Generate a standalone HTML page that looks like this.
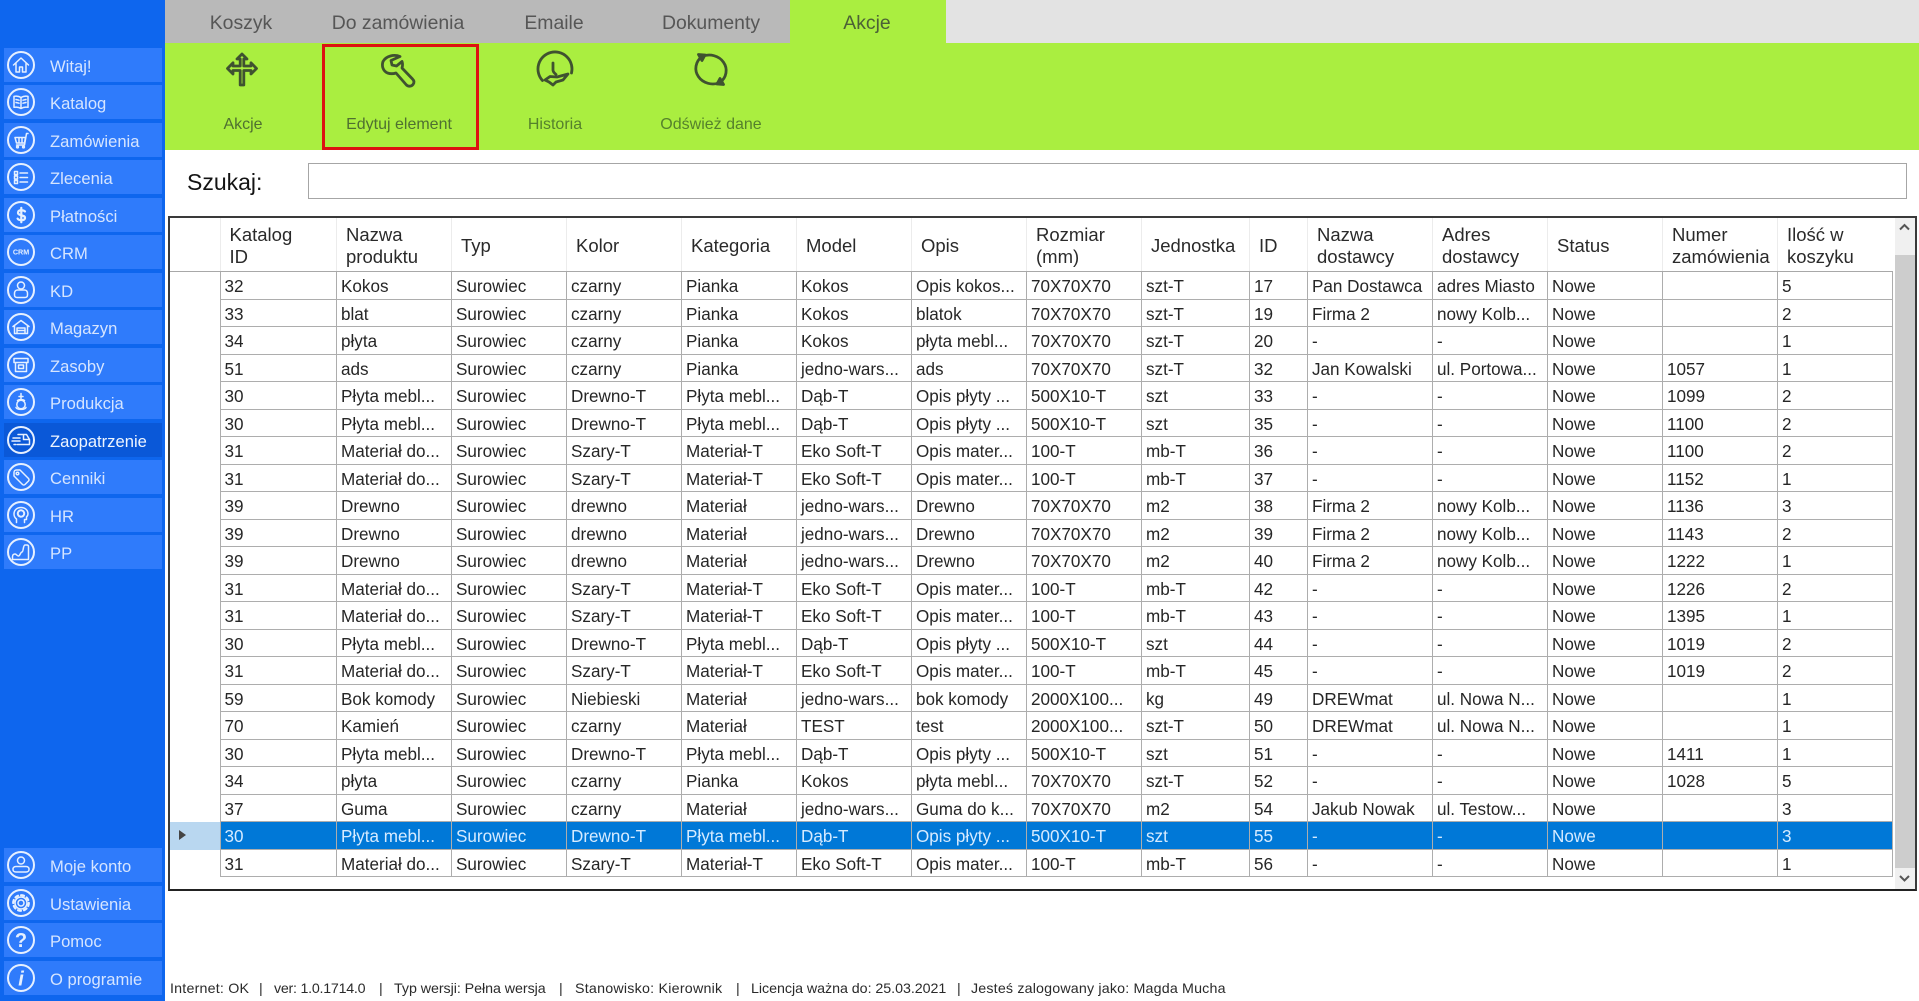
<!DOCTYPE html>
<html lang="pl"><head><meta charset="utf-8"><title>Akcje</title>
<style>
*{box-sizing:border-box}
html,body{margin:0;padding:0}
html{background:#fff}
body{width:1919px;height:1001px;position:relative;overflow:hidden;background:#fff;font-family:"Liberation Sans",sans-serif;color:#222;filter:blur(.35px)}
.abs{position:absolute}
#side{position:absolute;left:0;top:0;width:165px;height:1001px;background:#0e66ee}
.it{position:absolute;left:4px;width:158px;height:34px;background:#2f7bfb;color:#d6e5ff;font-size:16.6px;line-height:37.5px;padding-left:46px;white-space:nowrap}
.it.on{background:#0a58d8;color:#eef5ff}
.it svg{position:absolute;left:2px;top:2px;width:30px;height:30px;fill:none;stroke:#e6f0ff;stroke-width:1.5;stroke-linecap:round;stroke-linejoin:round}
.it svg circle.o{stroke-width:2}
.it svg text{fill:#e6f0ff;stroke:none;font-family:"Liberation Sans",sans-serif;text-anchor:middle;font-weight:bold}
.tab{position:absolute;top:0;height:43px;width:156px;text-align:center;font-size:19.4px;line-height:47px;color:#565656}
#band{position:absolute;left:165px;top:43px;width:1754px;height:107px;background:#aaee40}
.tl{position:absolute;top:116px;width:156px;text-align:center;font-size:16px;line-height:18px;color:#55812c}
.ti{position:absolute;top:49px;width:40px;height:40px;fill:none;stroke:#3f5230;stroke-width:2.8;stroke-linecap:round;stroke-linejoin:round}
#tbl{position:absolute;left:168px;top:216px;width:1749px;height:675px;border:2px solid #3a3a3a;border-bottom-color:#222;background:#fff;overflow:hidden}
.r,.h{display:grid;grid-template-columns:50.5px 116.5px 115px 115px 115px 115px 115px 115px 115px 108px 58px 125px 115px 115px 115px 115px;position:absolute;left:0;width:1723px}
.h{top:0;height:54px;border-bottom:1.5px solid #a8a8a8;font-size:18.5px;line-height:22px;color:#2a2a2a;grid-template-rows:52.5px}
.h div{display:flex;align-items:center;padding-left:9px;padding-top:4px;border-right:1.5px solid #ececec}
.r{height:27.5px;font-size:17.1px;line-height:29.5px;color:#262626;grid-template-rows:27.5px}
.r div{border-right:1.5px solid #adadad;border-bottom:1.5px solid #adadad;padding-left:4px;white-space:nowrap;overflow:hidden}
.r div:first-child{border-bottom:none;border-right:1.5px solid #adadad;padding:0}
.r.s{color:#d6ebff}
.r.s div{background:#0078d7}
.r.s div:first-child{background:#b9d7f0;position:relative}
.r.s div:first-child:after{content:"";position:absolute;left:9px;top:8px;border-left:7px solid #444;border-top:5.5px solid transparent;border-bottom:5.5px solid transparent}
.st{position:absolute;top:980px;font-size:14.25px;line-height:18px;color:#2a2a2a;white-space:nowrap}
</style></head><body>

<div id="side">
<div class="it" style="top:47.5px"><svg viewBox="0 0 30 30"><circle class="o" cx="15" cy="15" r="13"/><path d="M7.5 15 15 8l7.5 7M10 13.5V22h3.5v-5h3v5H20v-8.500"/></svg>Witaj!</div>
<div class="it" style="top:85px"><svg viewBox="0 0 30 30"><circle class="o" cx="15" cy="15" r="13"/><path d="M15 10.500c-2-1.300-4.500-1.700-7-1.200v11c2.500-.5 5-.1 7 1.200 2-1.300 4.500-1.700 7-1.200v-11c-2.500-.5-5-.1-7 1.200zM15 10.500v11M10 12.500l3 .7M10 15.500l3 .7M20 12.500l-3 .7M20 15.500l-3 .7"/></svg>Katalog</div>
<div class="it" style="top:122.5px"><svg viewBox="0 0 30 30"><circle class="o" cx="15" cy="15" r="13"/><path d="M22 8.500h-1.500L18.500 20h-8M9 12.500h10.500l-1 5.500h-8zM13 12.500v5.500M16 12.500v5.500"/><circle cx="11.500" cy="22" r=".9"/><circle cx="17.500" cy="22" r=".9"/></svg>Zamówienia</div>
<div class="it" style="top:160px"><svg viewBox="0 0 30 30"><circle class="o" cx="15" cy="15" r="13"/><path d="M8.500 9.500h3v3h-3zM8.500 14h3v3h-3zM8.500 18.500h3v3h-3zM14 11h7.500M14 15.500h7.500M14 20h7.500"/></svg>Zlecenia</div>
<div class="it" style="top:197.5px"><svg viewBox="0 0 30 30"><circle class="o" cx="15" cy="15" r="13"/><path stroke-width="2.200" d="M19 11.500c-1-1.500-7-2.300-7 1.200 0 3.300 7 1.800 7 5.200 0 3.200-6.200 2.800-7.400.7M15.300 7.800v14.400"/></svg>Płatności</div>
<div class="it" style="top:235px"><svg viewBox="0 0 30 30"><circle class="o" cx="15" cy="15" r="13"/><text x="15" y="17.500" font-size="7.200">CRM</text></svg>CRM</div>
<div class="it" style="top:272.500px"><svg viewBox="0 0 30 30"><circle class="o" cx="15" cy="15" r="13"/><circle cx="15" cy="10.500" r="3.500"/><path d="M11.500 15h7c2 0 3 1.500 3 3.500V20c0 1.500-1 2.500-2.500 2.500h-8C9.500 22.500 8.500 21.500 8.500 20v-1.500c0-2 1-3.500 3-3.500z"/></svg>KD</div>
<div class="it" style="top:310px"><svg viewBox="0 0 30 30"><circle class="o" cx="15" cy="15" r="13"/><path d="M7 14.500 15 8.500l8 6M8.500 13.500V21.500h13v-8M11 21.500V16h8v5.500M11 18.500h8"/></svg>Magazyn</div>
<div class="it" style="top:347.500px"><svg viewBox="0 0 30 30"><circle class="o" cx="15" cy="15" r="13"/><path d="M8 8.500h14v4H8zM9.500 12.500v9h11v-9M12.500 15h5v3.500h-5z"/></svg>Zasoby</div>
<div class="it" style="top:385px"><svg viewBox="0 0 30 30"><circle class="o" cx="15" cy="15" r="13"/><path d="M15 6.500V12M13 9.500h4M11.500 13.500c2-1.500 5-1.500 7 0"/><circle cx="15" cy="17.500" r="4.200"/><path d="M10 20.500c1 2.500 9 2.500 10 0"/></svg>Produkcja</div>
<div class="it on" style="top:422.500px"><svg viewBox="0 0 30 30"><circle class="o" cx="15" cy="15" r="13"/><path d="M7 13h7M6 16h8M8 19.500h2M12 9.500h8.500l3 5v5h-12M17.500 9.500v5h6M14 19.500h5"/></svg>Zaopatrzenie</div>
<div class="it" style="top:460px"><svg viewBox="0 0 30 30"><circle class="o" cx="15" cy="15" r="13"/><path d="M8 10.500c0-1.500 1-2.500 2.500-2.500h3.500l8.500 8.500c.7.7.7 1.800 0 2.500l-3.500 3.500c-.7.7-1.800.7-2.500 0L8 14z"/><circle cx="11.500" cy="11.500" r="1.300"/></svg>Cenniki</div>
<div class="it" style="top:497.500px"><svg viewBox="0 0 30 30"><circle class="o" cx="15" cy="15" r="13"/><path d="M10.500 22.500v-3.500C8.500 17.500 8 15.500 8 14c0-4 3-6.500 7-6.500s7 2.500 7 6.500c0 1.500-.5 2-1.500 3v2.500h-2v3"/><circle cx="15" cy="13.500" r="3.200" stroke-dasharray="1.500 .8" stroke-width="2"/></svg>HR</div>
<div class="it" style="top:535px"><svg viewBox="0 0 30 30"><circle class="o" cx="15" cy="15" r="13"/><path d="M6.500 22.500v-3c0-1.500 1-2.500 2.500-2.500 1.500 0 2 2 3.500 2s2-4 3.500-4 1-7 3-7h2c1 0 1.500.5 1.500 1.500v13zM6.500 22.500h16"/></svg>PP</div>

<div class="it" style="top:848px"><svg viewBox="0 0 30 30"><circle class="o" cx="15" cy="15" r="13"/><circle cx="15" cy="10.500" r="3.500"/><path d="M10 16.500h10c2 0 3 1.200 3 2.500v.5c0 1.300-1 2.500-3 2.500H10c-2 0-3-1.200-3-2.500V19c0-1.300 1-2.500 3-2.500z"/></svg>Moje konto</div>
<div class="it" style="top:885.500px"><svg viewBox="0 0 30 30"><circle class="o" cx="15" cy="15" r="13"/><circle cx="15" cy="15" r="3"/><circle cx="15" cy="15" r="6"/><circle cx="15" cy="15" r="7.800" stroke-width="2.200" stroke-dasharray="3 3.100"/></svg>Ustawienia</div>
<div class="it" style="top:923px"><svg viewBox="0 0 30 30"><circle class="o" cx="15" cy="15" r="13"/><text x="15" y="22" font-size="20">?</text></svg>Pomoc</div>
<div class="it" style="top:960.500px"><svg viewBox="0 0 30 30"><circle class="o" cx="15" cy="15" r="13"/><text x="15" y="22.500" font-size="20" font-style="italic" font-family="Liberation Serif">i</text></svg>O programie</div>
</div>

<div class="abs" style="left:165px;top:0;width:1754px;height:43px;background:#e3e3e3"></div>
<div class="abs" style="left:165px;top:0;width:625px;height:43px;background:#b9b9b9"></div>
<div class="abs" style="left:790px;top:0;width:156px;height:43px;background:#aaee40"></div>
<div class="tab" style="left:163px">Koszyk</div>
<div class="tab" style="left:320px">Do zamówienia</div>
<div class="tab" style="left:476px">Emaile</div>
<div class="tab" style="left:633px">Dokumenty</div>
<div class="tab" style="left:789px;color:#4c6136">Akcje</div>

<div id="band"></div>
<svg class="ti" style="left:222px" viewBox="0 0 40 40"><path d="M20 5l-5 5h3.200v7H11v-3.200l-5.500 5.700L11 25v-3.500h7.200V36h3.600V21.500H29V25l5.500-5.500L29 13.800V17h-7.200v-7H25z"/></svg>
<svg class="ti" style="left:378px" viewBox="0 0 40 40"><path d="M22 7.500C16 5 8 7 5 12.500 3.500 17 5 22 9.500 24c3 1 5.500 1 8.500 0l10 11.500c2 2.500 5.500 2 7 0 1.500-2 1-4-.5-5.500L24 19c1-3 .5-5 0-6.500L18.500 17 14 16l-1-4.500z"/></svg>
<svg class="ti" style="left:535px" viewBox="0 0 40 40"><path d="M7.500 31.500A17 17 0 1 1 36.500 24"/><path d="M18 14v7c0 2 1.500 3 3 4.500"/><path d="M10 31l5-3.500 7 .5 11-3-5 6-7 2-3 3-4-3z"/></svg>
<svg class="ti" style="left:691px" viewBox="0 0 40 40"><path d="M11 7.500A17 15.500 0 0 1 29 33.500A17 15.500 0 0 1 11 7.500"/><path d="M7.500 5.500l6.500.5-3 5.500zM32.500 35.500l-6.500-.5 3-5.500z" fill="#3f5230"/></svg>

<div class="tl" style="left:165px;color:#4f7030">Akcje</div>
<div class="tl" style="left:321px;color:#4f7030">Edytuj element</div>
<div class="tl" style="left:477px">Historia</div>
<div class="tl" style="left:633px">Odśwież dane</div>
<div class="abs" style="left:322px;top:44px;width:157px;height:105.500px;border:3px solid #dd1111"></div>

<div class="abs" style="left:187px;top:168px;font-size:23px;line-height:28px;color:#141414">Szukaj:</div>
<div class="abs" style="left:308px;top:163px;width:1599px;height:36px;border:1.500px solid #a6a6a6;background:#fff"></div>

<div id="tbl">
<div class="h"><div></div><div>Katalog<br>ID</div><div>Nazwa<br>produktu</div><div>Typ</div><div>Kolor</div><div>Kategoria</div><div>Model</div><div>Opis</div><div>Rozmiar<br>(mm)</div><div>Jednostka</div><div>ID</div><div>Nazwa<br>dostawcy</div><div>Adres<br>dostawcy</div><div>Status</div><div>Numer<br>zamówienia</div><div style="border-right:0">Ilość w<br>koszyku</div></div>
<div class="r" style="top:54px"><div></div><div>32</div><div>Kokos</div><div>Surowiec</div><div>czarny</div><div>Pianka</div><div>Kokos</div><div>Opis kokos...</div><div>70X70X70</div><div>szt-T</div><div>17</div><div>Pan Dostawca</div><div>adres Miasto</div><div>Nowe</div><div></div><div>5</div></div>
<div class="r" style="top:81.500px"><div></div><div>33</div><div>blat</div><div>Surowiec</div><div>czarny</div><div>Pianka</div><div>Kokos</div><div>blatok</div><div>70X70X70</div><div>szt-T</div><div>19</div><div>Firma 2</div><div>nowy Kolb...</div><div>Nowe</div><div></div><div>2</div></div>
<div class="r" style="top:109px"><div></div><div>34</div><div>płyta</div><div>Surowiec</div><div>czarny</div><div>Pianka</div><div>Kokos</div><div>płyta mebl...</div><div>70X70X70</div><div>szt-T</div><div>20</div><div>-</div><div>-</div><div>Nowe</div><div></div><div>1</div></div>
<div class="r" style="top:136.500px"><div></div><div>51</div><div>ads</div><div>Surowiec</div><div>czarny</div><div>Pianka</div><div>jedno-wars...</div><div>ads</div><div>70X70X70</div><div>szt-T</div><div>32</div><div>Jan Kowalski</div><div>ul. Portowa...</div><div>Nowe</div><div>1057</div><div>1</div></div>
<div class="r" style="top:164px"><div></div><div>30</div><div>Płyta mebl...</div><div>Surowiec</div><div>Drewno-T</div><div>Płyta mebl...</div><div>Dąb-T</div><div>Opis płyty ...</div><div>500X10-T</div><div>szt</div><div>33</div><div>-</div><div>-</div><div>Nowe</div><div>1099</div><div>2</div></div>
<div class="r" style="top:191.500px"><div></div><div>30</div><div>Płyta mebl...</div><div>Surowiec</div><div>Drewno-T</div><div>Płyta mebl...</div><div>Dąb-T</div><div>Opis płyty ...</div><div>500X10-T</div><div>szt</div><div>35</div><div>-</div><div>-</div><div>Nowe</div><div>1100</div><div>2</div></div>
<div class="r" style="top:219px"><div></div><div>31</div><div>Materiał do...</div><div>Surowiec</div><div>Szary-T</div><div>Materiał-T</div><div>Eko Soft-T</div><div>Opis mater...</div><div>100-T</div><div>mb-T</div><div>36</div><div>-</div><div>-</div><div>Nowe</div><div>1100</div><div>2</div></div>
<div class="r" style="top:246.500px"><div></div><div>31</div><div>Materiał do...</div><div>Surowiec</div><div>Szary-T</div><div>Materiał-T</div><div>Eko Soft-T</div><div>Opis mater...</div><div>100-T</div><div>mb-T</div><div>37</div><div>-</div><div>-</div><div>Nowe</div><div>1152</div><div>1</div></div>
<div class="r" style="top:274px"><div></div><div>39</div><div>Drewno</div><div>Surowiec</div><div>drewno</div><div>Materiał</div><div>jedno-wars...</div><div>Drewno</div><div>70X70X70</div><div>m2</div><div>38</div><div>Firma 2</div><div>nowy Kolb...</div><div>Nowe</div><div>1136</div><div>3</div></div>
<div class="r" style="top:301.500px"><div></div><div>39</div><div>Drewno</div><div>Surowiec</div><div>drewno</div><div>Materiał</div><div>jedno-wars...</div><div>Drewno</div><div>70X70X70</div><div>m2</div><div>39</div><div>Firma 2</div><div>nowy Kolb...</div><div>Nowe</div><div>1143</div><div>2</div></div>
<div class="r" style="top:329px"><div></div><div>39</div><div>Drewno</div><div>Surowiec</div><div>drewno</div><div>Materiał</div><div>jedno-wars...</div><div>Drewno</div><div>70X70X70</div><div>m2</div><div>40</div><div>Firma 2</div><div>nowy Kolb...</div><div>Nowe</div><div>1222</div><div>1</div></div>
<div class="r" style="top:356.500px"><div></div><div>31</div><div>Materiał do...</div><div>Surowiec</div><div>Szary-T</div><div>Materiał-T</div><div>Eko Soft-T</div><div>Opis mater...</div><div>100-T</div><div>mb-T</div><div>42</div><div>-</div><div>-</div><div>Nowe</div><div>1226</div><div>2</div></div>
<div class="r" style="top:384px"><div></div><div>31</div><div>Materiał do...</div><div>Surowiec</div><div>Szary-T</div><div>Materiał-T</div><div>Eko Soft-T</div><div>Opis mater...</div><div>100-T</div><div>mb-T</div><div>43</div><div>-</div><div>-</div><div>Nowe</div><div>1395</div><div>1</div></div>
<div class="r" style="top:411.500px"><div></div><div>30</div><div>Płyta mebl...</div><div>Surowiec</div><div>Drewno-T</div><div>Płyta mebl...</div><div>Dąb-T</div><div>Opis płyty ...</div><div>500X10-T</div><div>szt</div><div>44</div><div>-</div><div>-</div><div>Nowe</div><div>1019</div><div>2</div></div>
<div class="r" style="top:439px"><div></div><div>31</div><div>Materiał do...</div><div>Surowiec</div><div>Szary-T</div><div>Materiał-T</div><div>Eko Soft-T</div><div>Opis mater...</div><div>100-T</div><div>mb-T</div><div>45</div><div>-</div><div>-</div><div>Nowe</div><div>1019</div><div>2</div></div>
<div class="r" style="top:466.500px"><div></div><div>59</div><div>Bok komody</div><div>Surowiec</div><div>Niebieski</div><div>Materiał</div><div>jedno-wars...</div><div>bok komody</div><div>2000X100...</div><div>kg</div><div>49</div><div>DREWmat</div><div>ul. Nowa N...</div><div>Nowe</div><div></div><div>1</div></div>
<div class="r" style="top:494px"><div></div><div>70</div><div>Kamień</div><div>Surowiec</div><div>czarny</div><div>Materiał</div><div>TEST</div><div>test</div><div>2000X100...</div><div>szt-T</div><div>50</div><div>DREWmat</div><div>ul. Nowa N...</div><div>Nowe</div><div></div><div>1</div></div>
<div class="r" style="top:521.500px"><div></div><div>30</div><div>Płyta mebl...</div><div>Surowiec</div><div>Drewno-T</div><div>Płyta mebl...</div><div>Dąb-T</div><div>Opis płyty ...</div><div>500X10-T</div><div>szt</div><div>51</div><div>-</div><div>-</div><div>Nowe</div><div>1411</div><div>1</div></div>
<div class="r" style="top:549px"><div></div><div>34</div><div>płyta</div><div>Surowiec</div><div>czarny</div><div>Pianka</div><div>Kokos</div><div>płyta mebl...</div><div>70X70X70</div><div>szt-T</div><div>52</div><div>-</div><div>-</div><div>Nowe</div><div>1028</div><div>5</div></div>
<div class="r" style="top:576.500px"><div></div><div>37</div><div>Guma</div><div>Surowiec</div><div>czarny</div><div>Materiał</div><div>jedno-wars...</div><div>Guma do k...</div><div>70X70X70</div><div>m2</div><div>54</div><div>Jakub Nowak</div><div>ul. Testow...</div><div>Nowe</div><div></div><div>3</div></div>
<div class="r s" style="top:604px"><div></div><div>30</div><div>Płyta mebl...</div><div>Surowiec</div><div>Drewno-T</div><div>Płyta mebl...</div><div>Dąb-T</div><div>Opis płyty ...</div><div>500X10-T</div><div>szt</div><div>55</div><div>-</div><div>-</div><div>Nowe</div><div></div><div>3</div></div>
<div class="r" style="top:631.500px"><div></div><div>31</div><div>Materiał do...</div><div>Surowiec</div><div>Szary-T</div><div>Materiał-T</div><div>Eko Soft-T</div><div>Opis mater...</div><div>100-T</div><div>mb-T</div><div>56</div><div>-</div><div>-</div><div>Nowe</div><div></div><div>1</div></div>
<div class="abs" style="left:1725px;top:0;width:20px;height:671px;background:#f0f0f0"></div>
<div class="abs" style="left:1725px;top:37px;width:20px;height:613px;background:#cdcdcd"></div>
<svg class="abs" style="left:1725px;top:0;width:20px;height:671px" viewBox="0 0 20 671"><path d="M5 11.500l4.500-4.500 4.500 4.500M5 658l4.500 4.500 4.500-4.500" fill="none" stroke="#555" stroke-width="2"/></svg>
</div>

<div class="st" style="left:170px;letter-spacing:.2px">Internet: OK</div>
<div class="st" style="left:259px">|</div>
<div class="st" style="left:274px;letter-spacing:-.25px">ver: 1.0.1714.0</div>
<div class="st" style="left:379px">|</div>
<div class="st" style="left:394px;letter-spacing:-.05px">Typ wersji: Pełna wersja</div>
<div class="st" style="left:559px">|</div>
<div class="st" style="left:575px;letter-spacing:.23px">Stanowisko: Kierownik</div>
<div class="st" style="left:736px">|</div>
<div class="st" style="left:751px;letter-spacing:-.04px">Licencja ważna do: 25.03.2021</div>
<div class="st" style="left:957px">|</div>
<div class="st" style="left:971px;letter-spacing:.17px">Jesteś zalogowany jako: Magda Mucha</div>
</body></html>
